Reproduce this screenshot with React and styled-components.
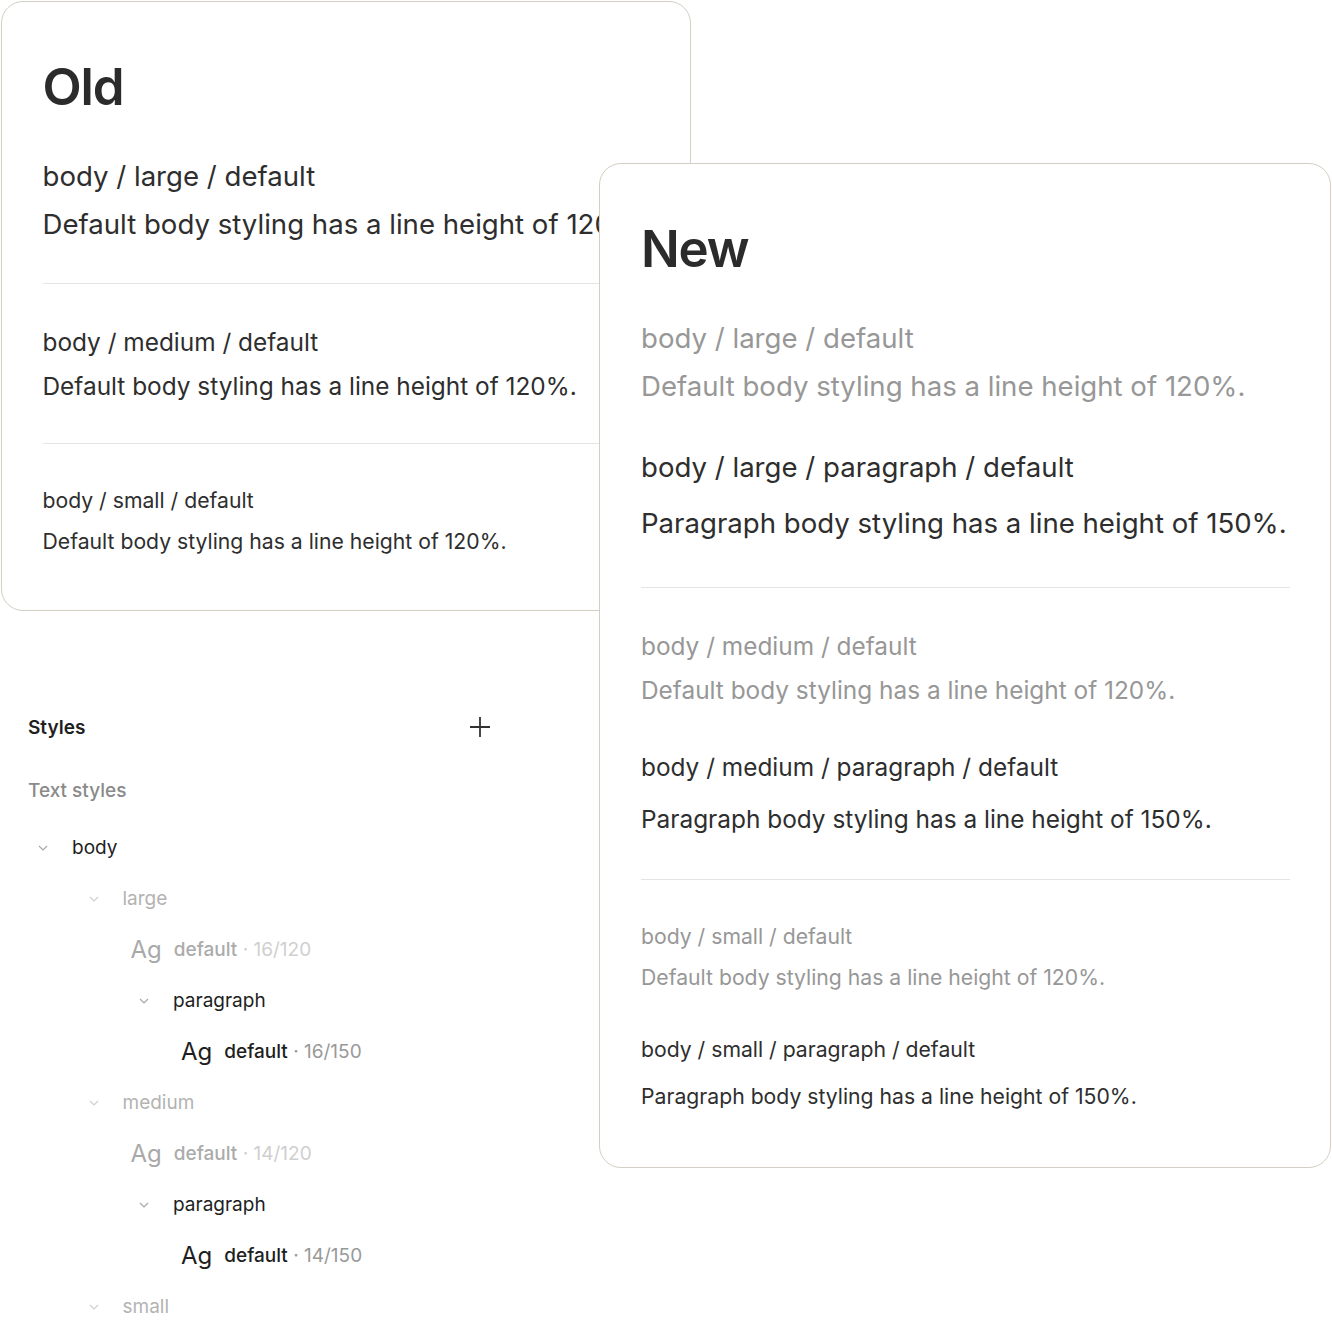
import React from "react";
import styled, { createGlobalStyle } from "styled-components";

const GlobalStyle = createGlobalStyle`
  html, body {
    margin: 0;
    padding: 0;
    background: #ffffff;
  }
  body {
    font-family: Inter, "Noto Sans", "Liberation Sans", sans-serif;
    color: #2e2e2e;
    -webkit-font-smoothing: antialiased;
  }
`;

// design tokens 16 / 14 / 12, shown enlarged
const FS = { large: 27.6, medium: 24.4, small: 21.2 };

const Canvas = styled.div`
  position: relative;
  width: 1332px;
  height: 1332px;
  overflow: hidden;
`;

const LeftColumn = styled.div`
  display: flex;
  flex-direction: column;
  padding: 1px 0 0 1px;
`;

const Card = styled.div`
  box-sizing: border-box;
  background: #ffffff;
  border: 1.5px solid #d3cfc3;
  border-radius: 22px;
  padding: 53.5px 40.5px 54px;
  display: flex;
  flex-direction: column;
  overflow: hidden;
`;

const OldCard = styled(Card)`
  width: 690px;
  height: 610px;
`;

const NewCard = styled(Card)`
  position: absolute;
  left: 599px;
  top: 163px;
  width: 732px;
  height: 1005px;
  padding-left: 41px;
`;

const Heading = styled.h1`
  margin: 0 0 43px;
  font-size: 51px;
  line-height: 1.2;
  font-weight: 600;
  color: #2b2b2b;
  letter-spacing: -1.2px;
`;

const Section = styled.div`
  display: flex;
  flex-direction: column;
  gap: 44px;
`;

const Divider = styled.hr`
  flex-shrink: 0;
  border: none;
  border-top: 1.5px solid #e4e4e4;
  margin: 42px 0 44px;
  width: ${(p) => (p.$wide ? "700px" : "100%")};
`;

const Group = styled.div`
  display: flex;
  flex-direction: column;
  gap: 15px;
  white-space: nowrap;
`;

const Line = styled.div`
  font-size: ${(p) => FS[p.$size]}px;
  line-height: ${(p) => (p.$para ? 1.5 : 1.2)};
  color: ${(p) => (p.$muted ? "#979797" : "#2e2e2e")};
`;

function Sample({ size, para, muted, label, text }) {
  return (
    <Group>
      <Line $size={size} $para={para} $muted={muted}>
        {label}
      </Line>
      <Line $size={size} $para={para} $muted={muted}>
        {text}
      </Line>
    </Group>
  );
}

const DEFAULT_TEXT = "Default body styling has a line height of 120%.";
const PARA_TEXT = "Paragraph body styling has a line height of 150%.";
const SIZES = ["large", "medium", "small"];

/* ---------- styles panel ---------- */

const Panel = styled.div`
  width: 464px;
  margin-top: 99px;
  padding-left: 27px;
  display: flex;
  flex-direction: column;
`;

const PanelHeader = styled.div`
  display: flex;
  align-items: center;
  justify-content: space-between;
  height: 34px;
`;

const PanelTitle = styled.div`
  font-size: 19px;
  font-weight: 600;
  color: #1f1f1f;
`;

const AddButton = styled.button`
  border: none;
  background: none;
  padding: 0;
  width: 24px;
  height: 24px;
  display: flex;
  align-items: center;
  justify-content: center;
  color: #333;
  cursor: pointer;
`;

const SectionTitle = styled.div`
  margin-top: 29px;
  height: 34px;
  display: flex;
  align-items: center;
  font-size: 19px;
  font-weight: 500;
  color: #8a8a8a;
`;

const Tree = styled.div`
  margin-top: 15px;
  display: flex;
  flex-direction: column;
`;

const Row = styled.div`
  height: 51px;
  display: flex;
  align-items: center;
  padding-left: ${(p) => p.$indent}px;
  font-size: 19px;
  color: ${(p) => (p.$dim ? "#b3b3b3" : "#1e1e1e")};
`;

const Chevron = styled.span`
  width: 34px;
  display: flex;
  align-items: center;
  color: ${(p) => (p.$dim ? "#d0d0d0" : "#a8a8a8")};
`;

const Ag = styled.span`
  font-size: 24px;
  margin-right: 12px;
  color: ${(p) => (p.$dim ? "#a9a9a9" : "#1e1e1e")};
`;

const StyleName = styled.span`
  font-weight: 500;
  color: ${(p) => (p.$dim ? "#ababab" : "#1e1e1e")};
`;

const StyleMeta = styled.span`
  color: ${(p) => (p.$dim ? "#cfcfcf" : "#999999")};
`;

const ChevronIcon = () => (
  <svg width="10" height="6" viewBox="0 0 10 6" fill="none">
    <path d="M1 1l4 4 4-4" stroke="currentColor" strokeWidth="1.2" />
  </svg>
);

const PlusIcon = () => (
  <svg width="20" height="20" viewBox="0 0 20 20" fill="none">
    <path d="M10 0v20M0 10h20" stroke="currentColor" strokeWidth="1.8" />
  </svg>
);

const STEP = 50.5;

function GroupRow({ depth, dim, children }) {
  return (
    <Row $indent={10 + STEP * depth} $dim={dim}>
      <Chevron $dim={dim}>
        <ChevronIcon />
      </Chevron>
      {children}
    </Row>
  );
}

function LeafRow({ depth, dim, metric }) {
  return (
    <Row $indent={52 + STEP * depth} $dim={dim}>
      <Ag $dim={dim}>Ag</Ag>
      <StyleName $dim={dim}>default</StyleName>
      <StyleMeta $dim={dim}>&nbsp;· {metric}</StyleMeta>
    </Row>
  );
}

function StylesPanel() {
  return (
    <Panel>
      <PanelHeader>
        <PanelTitle>Styles</PanelTitle>
        <AddButton aria-label="Add style">
          <PlusIcon />
        </AddButton>
      </PanelHeader>
      <SectionTitle>Text styles</SectionTitle>
      <Tree>
        <GroupRow depth={0}>body</GroupRow>
        <GroupRow depth={1} dim>
          large
        </GroupRow>
        <LeafRow depth={1} dim metric="16/120" />
        <GroupRow depth={2}>paragraph</GroupRow>
        <LeafRow depth={2} metric="16/150" />
        <GroupRow depth={1} dim>
          medium
        </GroupRow>
        <LeafRow depth={1} dim metric="14/120" />
        <GroupRow depth={2}>paragraph</GroupRow>
        <LeafRow depth={2} metric="14/150" />
        <GroupRow depth={1} dim>
          small
        </GroupRow>
      </Tree>
    </Panel>
  );
}

export default function App() {
  return (
    <>
      <GlobalStyle />
      <Canvas>
        <LeftColumn>
          <OldCard>
            <Heading>Old</Heading>
            {SIZES.map((size, i) => (
              <React.Fragment key={size}>
                {i > 0 && <Divider $wide />}
                <Sample
                  size={size}
                  label={`body / ${size} / default`}
                  text={DEFAULT_TEXT}
                />
              </React.Fragment>
            ))}
          </OldCard>
          <StylesPanel />
        </LeftColumn>

        <NewCard>
          <Heading>New</Heading>
          {SIZES.map((size, i) => (
            <React.Fragment key={size}>
              {i > 0 && <Divider />}
              <Section>
                <Sample
                  size={size}
                  muted
                  label={`body / ${size} / default`}
                  text={DEFAULT_TEXT}
                />
                <Sample
                  size={size}
                  para
                  label={`body / ${size} / paragraph / default`}
                  text={PARA_TEXT}
                />
              </Section>
            </React.Fragment>
          ))}
        </NewCard>
      </Canvas>
    </>
  );
}
